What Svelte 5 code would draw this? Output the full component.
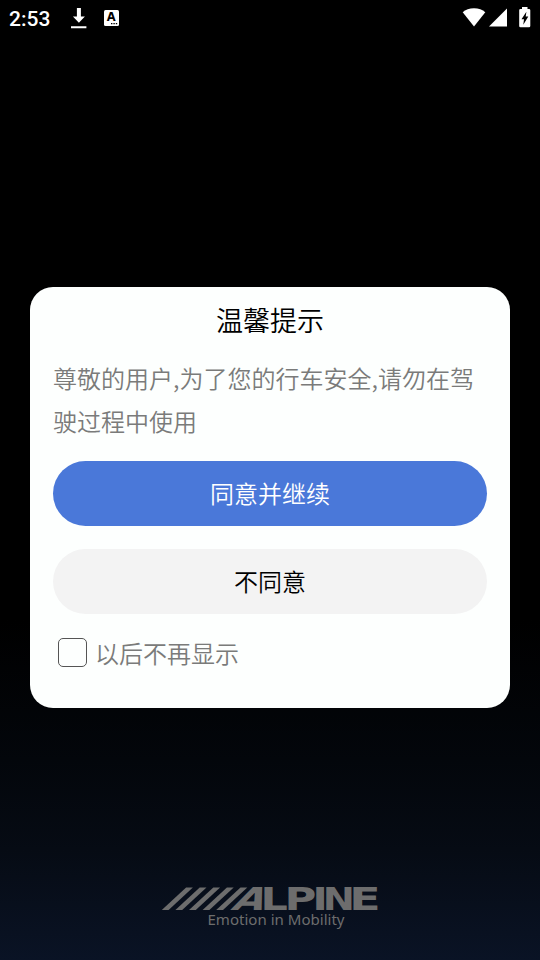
<script lang="ts">
    let remember = $state(false);

    // left edge of each slanted bar in the logo
    const bars = [0.8, 14.4, 28, 41.6, 55.2];

    // the wordmark is set wide, every letter with its own stretch
    const letters = [
        { char: 'A', x: 69, stretch: 1.3, skew: -27 },
        { char: 'L', x: 99.4, stretch: 1.36, skew: 0 },
        { char: 'P', x: 123.5, stretch: 1.38, skew: 0 },
        { char: 'I', x: 151.4, stretch: 1.3, skew: 0 },
        { char: 'N', x: 161.8, stretch: 1.22, skew: 0 },
        { char: 'E', x: 188.2, stretch: 1.46, skew: 0 }
    ];
</script>

<div class="screen">
    <header class="status-bar">
        <span class="time">2:53</span>
        <svg class="download" width="16" height="21" viewBox="0 0 16 21">
            <path d="M5.9 0h4v8.5h4l-6 6.3-6-6.3h4zM0 18.2h15.4v2H0z" fill="#fff" />
        </svg>
        <svg class="app-badge" width="15" height="16" viewBox="0 0 15 16">
            <rect width="15" height="16" rx="1.5" fill="#fff" />
            <text x="7.2" y="11.2" text-anchor="middle">A</text>
            <path d="M7 13h1.4v1.3H7zM9.4 13h1.4v1.3H9.4zM11.8 13h1.4v1.3h-1.4z" fill="#000" />
        </svg>
        <div class="spacer"></div>
        <svg class="wifi" width="24" height="19" viewBox="0 0 24 19">
            <path d="M.7 4.3C3.5 1.8 7.4.3 12 .3s8.5 1.5 11.3 4L12 18.6z" fill="#fff" />
        </svg>
        <svg class="signal" width="19" height="19" viewBox="0 0 19 19">
            <path d="M18 .6v18H0z" fill="#fff" />
        </svg>
        <svg class="battery" width="12" height="21" viewBox="0 0 12 21">
            <path d="M3 0h5.5v2H10a1.3 1.3 0 0 1 1.3 1.3v15.6a1.3 1.3 0 0 1-1.3 1.3H1.5a1.3 1.3 0 0 1-1.3-1.3V3.3A1.3 1.3 0 0 1 1.5 2H3z" fill="#fff" />
            <path d="M7.4 4.8l-.7 4.8h2.6l-5 8.1.7-5.4H2.5z" fill="#000" />
        </svg>
    </header>

    <main>
        <section class="dialog">
            <h1>温馨提示</h1>
            <p>尊敬的用户,为了您的行车安全,请勿在驾驶过程中使用</p>
            <button class="agree">同意并继续</button>
            <button class="refuse">不同意</button>
            <label>
                <input type="checkbox" bind:checked={remember} />
                <span>以后不再显示</span>
            </label>
        </section>
    </main>

    <footer>
        <svg class="logo" width="222" height="54" viewBox="-2 -8 222 54">
            {#each bars as x}
                <path d="M{x} 23 L{x + 24.3} .4 h6.8 L{x + 6.8} 23z" />
            {/each}
            {#each letters as l}
                <text class="letter" transform="translate({l.x} 23) skewX({l.skew}) scale({l.stretch} 1)">{l.char}</text>
            {/each}
            <text class="slogan" x="46.5" y="37.5" textLength="137" lengthAdjust="spacingAndGlyphs">Emotion in Mobility</text>
        </svg>
    </footer>
</div>

<style>
:global(body) {
    background: #000;
}

.screen {
    display: flex;
    flex-direction: column;
    width: 540px;
    height: 960px;
    overflow: hidden;
    background: linear-gradient(#000 0, #000 620px, #03060b 760px, #060b14 850px, #0a1325 960px);
    font-family: 'Noto Sans CJK SC', sans-serif;
    font-weight: 350;
}

.status-bar {
    display: flex;
    align-items: flex-start;
    height: 36px;
    padding: 0 9px;
    box-sizing: border-box;
}

.time {
    width: 62px;
    padding-top: 7px;
    font: 500 21px/24px Roboto, sans-serif;
    color: #fff;
}

.download {
    margin-top: 8px;
}

.app-badge {
    margin: 10px 0 0 17px;
}

.app-badge text {
    font: bold 11.5px 'DejaVu Sans', sans-serif;
}

.spacer {
    flex: 1;
}

.wifi {
    margin-top: 8px;
}

.signal {
    margin: 8px 0 0 3px;
}

.battery {
    margin: 7px 0 0 11px;
}

main {
    flex: 1;
    padding: 251px 30px 0;
}

.dialog {
    display: flex;
    flex-direction: column;
    height: 421px;
    padding: 11px 23px 0;
    box-sizing: border-box;
    border-radius: 23px;
    background: #fdfffe;
}

h1 {
    margin: 0;
    font-size: 27px;
    font-weight: inherit;
    line-height: 44px;
    text-align: center;
    color: #000;
}

p {
    margin: 14px 0 0;
    font-size: 24px;
    line-height: 43px;
    color: #7a7b7a;
}

button {
    height: 65px;
    padding: 0 0 2px;
    border: 0;
    border-radius: 33px;
    font-family: inherit;
    font-size: 24px;
    font-weight: inherit;
}

.agree {
    margin-top: 19px;
    background: #4a78d9;
    color: #fff;
}

.refuse {
    margin-top: 23px;
    background: #f3f3f3;
    color: #000;
}

label {
    display: flex;
    align-items: center;
    margin-top: 19px;
    padding-left: 5px;
    font-size: 24px;
    line-height: 38px;
    color: #7a7b7a;
}

label span {
    padding-top: 1px;
}

input {
    appearance: none;
    width: 29px;
    height: 29px;
    margin: 0 8px 0 0;
    border: 1.5px solid #555;
    border-radius: 5px;
}

footer {
    display: flex;
    justify-content: center;
    height: 81px;
}

.logo {
    fill: #6d6d6d;
    overflow: visible;
}

.letter {
    font: bold 31.5px 'DejaVu Sans', sans-serif;
}

.slogan {
    font: 14px 'Noto Sans', sans-serif;
}
</style>
